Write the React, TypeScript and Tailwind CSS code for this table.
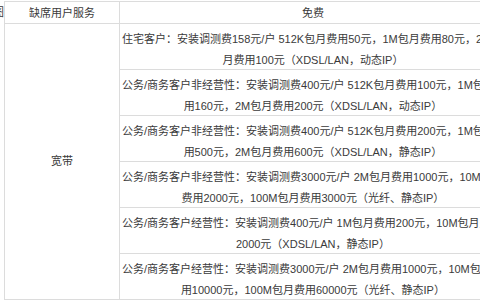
const rows = [
  {
    first: "住宅客户：安装调测费158元/户 512K包月费用50元，1M包月费用80元，2M包",
    second: "月费用100元（XDSL/LAN，动态IP）",
  },
  {
    first: "公务/商务客户非经营性：安装调测费400元/户 512K包月费用100元，1M包月费",
    second: "用160元，2M包月费用200元（XDSL/LAN，动态IP）",
  },
  {
    first: "公务/商务客户非经营性：安装调测费400元/户 512K包月费用200元，1M包月费",
    second: "用500元，2M包月费用600元（XDSL/LAN，静态IP）",
  },
  {
    first: "公务/商务客户非经营性：安装调测费3000元/户 2M包月费用1000元，10M包月",
    second: "费用2000元，100M包月费用3000元（光纤、静态IP）",
  },
  {
    first: "公务/商务客户经营性：安装调测费400元/户 1M包月费用200元，10M包月费用",
    second: "2000元（XDSL/LAN，静态IP）",
  },
  {
    first: "公务/商务客户经营性：安装调测费3000元/户 2M包月费用1000元，10M包月费",
    second: "用10000元，100M包月费用60000元（光纤、静态IP）",
  },
];

export default function App() {
  return (
    <div
      className="flex h-[300px] w-[480px] overflow-hidden bg-white text-[11px] text-[#3a3a3a]"
      style={{ fontFamily: '"Liberation Sans", "Noto Sans CJK SC", sans-serif' }}
    >
      {/* clipped glyph from the neighbouring column */}
      <div className="flex h-[22px] w-[4px] shrink-0 items-center justify-end overflow-hidden whitespace-nowrap pt-[3px]">
        <span>图</span>
      </div>

      <table className="mt-[1px] shrink-0 table-fixed border-collapse self-start">
        <colgroup>
          <col className="w-[115px]" />
          <col className="w-[383px]" />
        </colgroup>
        <tbody>
          <tr>
            <td className="h-[21px] border border-[#dcdcdc] pt-[2px] text-center leading-[19px]">
              缺席用户服务
            </td>
            <td className="h-[21px] border border-[#dcdcdc] pt-[2px] text-center leading-[19px]">
              免费
            </td>
          </tr>
          {rows.map((r, i) => (
            <tr key={i}>
              {i === 0 && (
                <td rowSpan={rows.length} className="border border-[#dcdcdc] text-center align-middle">
                  宽带
                </td>
              )}
              <td className="h-[45px] border border-[#dcdcdc] p-0 align-top">
                <div className="h-[45px] overflow-hidden pt-[5px] leading-[21px]">
                  <div className="whitespace-nowrap pl-[2px]">{r.first}</div>
                  <div className="whitespace-nowrap text-center">{r.second}</div>
                </div>
              </td>
            </tr>
          ))}
        </tbody>
      </table>
    </div>
  );
}
